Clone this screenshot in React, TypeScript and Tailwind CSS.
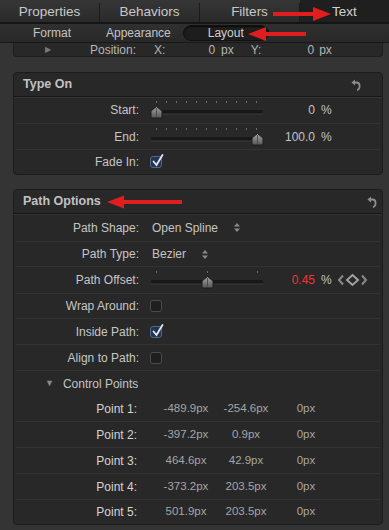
import React from 'react';

const LABEL = 'w-[125px] shrink-0 text-right text-[12px] text-[#c6c6c6]';

// Slider drawn as svg: ticks, groove and a pointed gray thumb
function Slider({ ticks, pos }: { ticks: number[]; pos: number }) {
  return (
    <svg width="114" height="26" className="shrink-0">
      <defs>
        <linearGradient id={`th${pos}`} x1="0" y1="0" x2="0" y2="1">
          <stop offset="0" stopColor="#a4a4a4" />
          <stop offset="1" stopColor="#555" />
        </linearGradient>
      </defs>
      {ticks.map((t) => (
        <rect key={t} x={t} y="4" width="1" height="2" fill="#6a6a6a" />
      ))}
      <rect x="1" y="13" width="112" height="4" rx="2" fill="#181818" />
      <rect x="1" y="16.5" width="112" height="1" fill="#3a3a3a" />
      <path
        d={`M${pos - 5.5} 14 L${pos} 9.5 L${pos + 5.5} 14 L${pos + 5.5} 21 L${pos - 5.5} 21 Z`}
        fill={`url(#th${pos})`}
        stroke="#1c1c1c"
        strokeWidth="1"
      />
      <line x1={pos} y1="11" x2={pos} y2="20.5" stroke="#444" strokeWidth="0.8" />
    </svg>
  );
}

function Check({ on }: { on?: boolean }) {
  return (
    <div
      className={
        'w-[12px] h-[12px] rounded-[3px] border relative ' +
        (on ? 'bg-[#26334a] border-[#4f6790]' : 'bg-[#1f1f1f] border-[#4a4a4a]')
      }
    >
      {on && (
        <svg width="14" height="14" className="absolute left-[0px] -top-[4px]">
          <path d="M2.5 8.5 L5.5 12 L11.5 2" fill="none" stroke="#dce8ff" strokeWidth="1.8" strokeLinecap="round" />
        </svg>
      )}
    </div>
  );
}

function UpDown() {
  return (
    <svg width="6" height="9" className="shrink-0">
      <path d="M0 3.5 L3 0 L6 3.5 Z" fill="#8a8a8a" />
      <path d="M0 5.5 L3 9 L6 5.5 Z" fill="#8a8a8a" />
    </svg>
  );
}

function ResetIcon() {
  return (
    <svg width="10" height="12">
      <path d="M0.5 3.5 L4 0.5 L4 6.5 Z" fill="#8e8e8e" />
      <path d="M3.5 3.5 H5.5 A3 3 0 0 1 8.5 6.5 V7.5 A3 3 0 0 1 6 11" fill="none" stroke="#8e8e8e" strokeWidth="1.8" />
    </svg>
  );
}

function Row({ label, h, last, children }: { label: string; h: string; last?: boolean; children?: React.ReactNode }) {
  return (
    <div className={`flex items-center ${h} ${last ? '' : 'border-b border-[#333333]'} mx-[2px]`}>
      <div className={LABEL + ' -ml-[2px]'}>{label}</div>
      <div className="flex items-center pl-[11px]">{children}</div>
    </div>
  );
}

function Header({ title, iconX }: { title: string; iconX: string }) {
  return (
    <div className="flex items-center h-[24px] border-b border-[#181818] shadow-[0_1px_0_#343434] relative">
      <span className="pl-[9px] text-[12.5px] font-bold text-[#c2c2c2]">{title}</span>
      <div className={`absolute top-[6px] ${iconX}`}>
        <ResetIcon />
      </div>
    </div>
  );
}

function Arrow({ left, className }: { left?: boolean; className: string }) {
  return (
    <svg width="60" height="16" className={'absolute ' + className} style={left ? { transform: 'scaleX(-1)' } : undefined}>
      <rect x="0" y="6" width="44" height="4" fill="#e21d1d" />
      <path d="M40 1 L58 8 L40 15 Z" fill="#e21d1d" />
    </svg>
  );
}

const points = [
  ['Point 1:', '-489.9px', '-254.6px', '0px'],
  ['Point 2:', '-397.2px', '0.9px', '0px'],
  ['Point 3:', '464.6px', '42.9px', '0px'],
  ['Point 4:', '-373.2px', '203.5px', '0px'],
  ['Point 5:', '501.9px', '203.5px', '0px'],
];
const pointH = ['h-[25px]', 'h-[26px]', 'h-[26px]', 'h-[26px]', 'h-[24px]'];

export default function App() {
  return (
    <div className="w-[389px] h-[530px] overflow-hidden relative bg-[#343434] font-['Liberation_Sans',Arial,sans-serif] select-none">
      {/* Main tabs */}
      <div className="flex h-[24px] pt-[3px] bg-gradient-to-b from-[#363636] to-[#2a2a2a] border-b-2 border-[#151515]">
        {['Properties', 'Behaviors', 'Filters'].map((t) => (
          <div key={t} className="w-[100px] flex items-center justify-center text-[13.5px] text-[#c8c8c8] border-r border-[#1b1b1b]">
            {t}
          </div>
        ))}
        <div className="flex-1 -mt-[3px] pt-[3px] flex items-center justify-center text-[13.5px] text-[#d2d2d2] bg-[#1f1f1f]">Text</div>
      </div>

      {/* Sub tabs */}
      <div className="flex items-center h-[19px] bg-gradient-to-b from-[#303030] to-[#282828] border-b border-[#181818] text-[12px] text-[#c4c4c4]">
        <span className="pl-[33px]">Format</span>
        <span className="ml-[35px]">Appearance</span>
        <div className="ml-[12px] w-[86px] h-[16px] rounded-full bg-[#1d1d1d] border border-[#111] shadow-[inset_0_1px_1px_#0c0c0c] flex items-center justify-center text-[#d0d0d0]">
          Layout
        </div>
      </div>

      {/* Partially scrolled panel */}
      <div className="ml-[13px] w-[370px] h-[14px] overflow-hidden bg-[#282828] border-x border-b border-[#1e1e1e] rounded-b-[4px]">
        <div className="flex items-center h-[16px] -mt-[1px] text-[12px] text-[#b4b4b4]">
          <span className="ml-[31px] text-[8px] text-[#7a7a7a]">▶</span>
          <span className="ml-[39px]">Position:</span>
          <span className="ml-[18px]">X:</span>
          <span className="ml-[43px]">0</span>
          <span className="ml-[6px]">px</span>
          <span className="ml-[17px]">Y:</span>
          <span className="ml-[46px]">0</span>
          <span className="ml-[5px]">px</span>
        </div>
      </div>

      {/* Type On */}
      <div className="ml-[13px] mt-[15px] w-[370px] bg-[#282828] border border-[#1c1c1c] rounded-[4px]">
        <Header title="Type On" iconX="left-[337px]" />
        <Row label="Start:" h="h-[27px]">
          <Slider ticks={[6, 16, 26, 36, 46, 56, 66, 76, 86, 96, 106]} pos={6.5} />
          <span className="w-[51px] text-right text-[12px] text-[#c4c4c4]">0</span>
          <span className="ml-[6px] text-[12px] text-[#c4c4c4]">%</span>
        </Row>
        <Row label="End:" h="h-[26px]">
          <Slider ticks={[6, 16, 26, 36, 46, 56, 66, 76, 86, 96, 106]} pos={107.5} />
          <span className="w-[51px] text-right text-[12px] text-[#c4c4c4]">100.0</span>
          <span className="ml-[6px] text-[12px] text-[#c4c4c4]">%</span>
        </Row>
        <Row label="Fade In:" h="h-[24px]" last>
          <Check on />
        </Row>
      </div>

      {/* Path Options */}
      <div className="ml-[13px] mt-[14px] w-[370px] bg-[#282828] border border-[#1c1c1c] rounded-[4px]">
        <Header title="Path Options" iconX="left-[353px]" />
        <Row label="Path Shape:" h="h-[28px]">
          <span className="text-[12px] text-[#c4c4c4] ml-[2px]">Open Spline</span>
          <span className="ml-[16px]"><UpDown /></span>
        </Row>
        <Row label="Path Type:" h="h-[25px]">
          <span className="text-[12px] text-[#c4c4c4] ml-[2px]">Bezier</span>
          <span className="ml-[16px]"><UpDown /></span>
        </Row>
        <Row label="Path Offset:" h="h-[27px]">
          <Slider ticks={[6, 57, 107]} pos={57.5} />
          <span className="w-[51px] text-right text-[12px] text-[#ee3434]">0.45</span>
          <span className="ml-[6px] text-[12px] text-[#c4c4c4]">%</span>
          <svg width="32" height="14" className="ml-[5px]">
            <path d="M6 2.5 L2 7 L6 11.5" fill="none" stroke="#8a8a8a" strokeWidth="2" />
            <path d="M15.5 2 L21 7 L15.5 12 L10 7 Z" fill="none" stroke="#a0a0a0" strokeWidth="2" />
            <path d="M25 2.5 L29 7 L25 11.5" fill="none" stroke="#8a8a8a" strokeWidth="2" />
          </svg>
        </Row>
        <Row label="Wrap Around:" h="h-[25px]">
          <Check />
        </Row>
        <Row label="Inside Path:" h="h-[26px]">
          <Check on />
        </Row>
        <Row label="Align to Path:" h="h-[26px]">
          <Check />
        </Row>
        <div className="flex items-center h-[27px] text-[12px] text-[#c4c4c4] -mt-[1px]">
          <span className="ml-[31px] text-[9px] text-[#8a8a8a]">▼</span>
          <span className="ml-[9px]">Control Points</span>
        </div>
        {points.map((p, i) => (
          <div key={p[0]} className={`flex items-center mx-[2px] ${pointH[i]} ${i < 4 ? 'border-b border-[#333333]' : ''}`}>
            <div className="w-[123px] shrink-0 -ml-[2px] pl-0 text-right text-[12px] text-[#d4d4d4]">{p[0]}</div>
            <div className="w-[72px] ml-[13px] text-center text-[11.5px] text-[#a6a6a6]">{p[1]}</div>
            <div className="w-[48px] text-center text-[11.5px] text-[#a6a6a6]">{p[2]}</div>
            <div className="w-[72px] text-center text-[11.5px] text-[#a6a6a6]">{p[3]}</div>
          </div>
        ))}
      </div>

      {/* Red annotation arrows */}
      <Arrow className="left-[273px] top-[6px]" />
      <Arrow left className="left-[246px] top-[26px]" />
      <svg width="80" height="16" className="absolute left-[106px] top-[194px]">
        <path d="M1 8 L18 1.5 L18 14.5 Z" fill="#e21d1d" />
        <rect x="16" y="6" width="60" height="4" fill="#e21d1d" />
      </svg>
    </div>
  );
}
